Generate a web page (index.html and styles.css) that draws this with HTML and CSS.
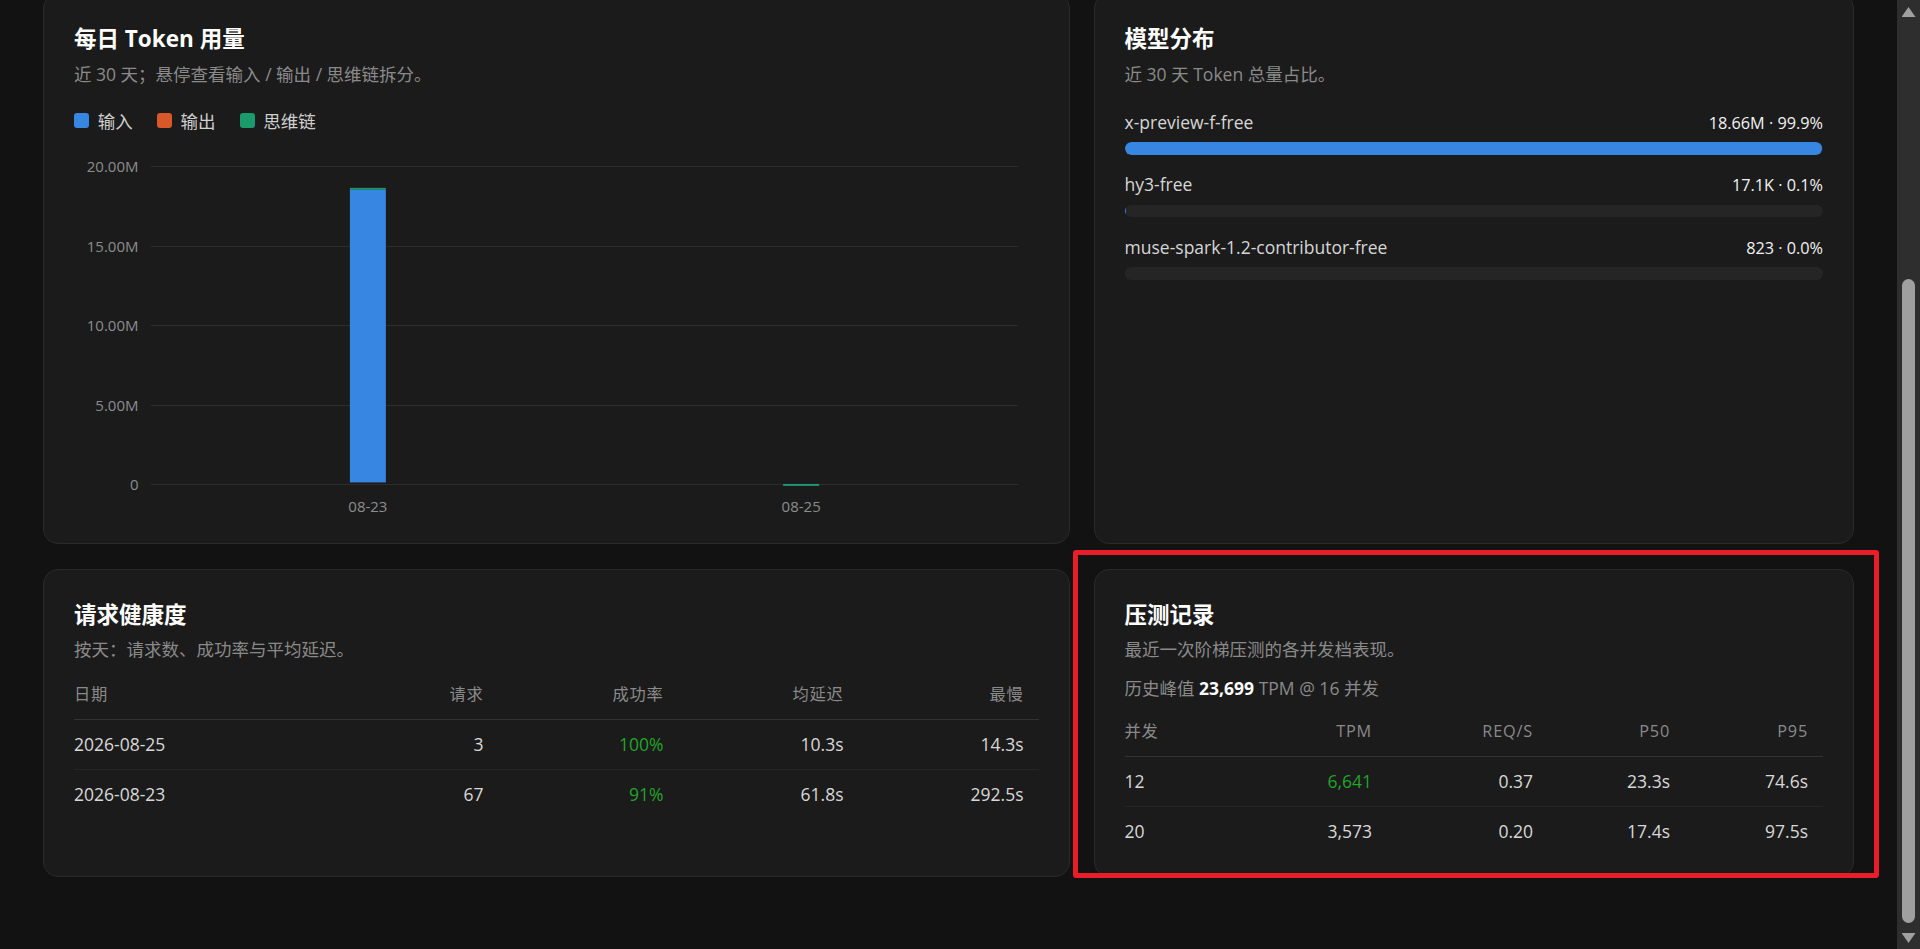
FILE: index.html
```html
<!DOCTYPE html>
<html lang="zh-CN">
<head>
<meta charset="utf-8">
<title>用量统计</title>
<link rel="stylesheet" href="styles.css">
</head>
<body>
<div class="viewport">
  <main class="page">
    <section class="board">
      <article class="card">
        <h2 class="card-title">每日 Token 用量</h2>
        <p class="card-desc">近 30 天；悬停查看输入 / 输出 / 思维链拆分。</p>
        <ul class="legend">
          <li class="legend-item"><span class="swatch swatch-input"></span>输入</li>
          <li class="legend-item"><span class="swatch swatch-output"></span>输出</li>
          <li class="legend-item"><span class="swatch swatch-reason"></span>思维链</li>
        </ul>
        <svg class="chart" viewBox="0 0 965 385" role="img" aria-label="每日 Token 用量">
          <g class="chart-grid">
            <line x1="77" x2="944" y1="28.5" y2="28.5"/>
            <line x1="77" x2="944" y1="108.5" y2="108.5"/>
            <line x1="77" x2="944" y1="187.5" y2="187.5"/>
            <line x1="77" x2="944" y1="267.5" y2="267.5"/>
            <line x1="77" x2="944" y1="346.5" y2="346.5"/>
          </g>
          <g class="chart-label chart-y">
            <text x="64.5" y="28.5" dy="0.35em">20.00M</text>
            <text x="64.5" y="108.5" dy="0.35em">15.00M</text>
            <text x="64.5" y="187.5" dy="0.35em">10.00M</text>
            <text x="64.5" y="267.5" dy="0.35em">5.00M</text>
            <text x="64.5" y="346.5" dy="0.35em">0</text>
          </g>
          <g class="chart-bars">
            <rect class="bar-input" x="276" y="51.8" width="36" height="292.7"/>
            <rect class="bar-reason" x="276" y="49.8" width="36" height="2"/>
            <rect class="bar-reason" x="709.5" y="346" width="36" height="2"/>
          </g>
          <g class="chart-label chart-x">
            <text x="294" y="368.7" dy="0.35em">08-23</text>
            <text x="727.5" y="368.7" dy="0.35em">08-25</text>
          </g>
        </svg>
      </article>

      <article class="card">
        <h2 class="card-title">模型分布</h2>
        <p class="card-desc">近 30 天 Token 总量占比。</p>
        <ul class="models">
          <li class="model">
            <div class="model-head"><span class="model-name">x-preview-f-free</span><span class="model-value">18.66M · 99.9%</span></div>
            <div class="model-track"><div class="model-fill" style="width: 99.9%"></div></div>
          </li>
          <li class="model">
            <div class="model-head"><span class="model-name">hy3-free</span><span class="model-value">17.1K · 0.1%</span></div>
            <div class="model-track"><div class="model-fill" style="width: 0.1%"></div></div>
          </li>
          <li class="model">
            <div class="model-head"><span class="model-name">muse-spark-1.2-contributor-free</span><span class="model-value">823 · 0.0%</span></div>
            <div class="model-track"><div class="model-fill" style="width: 0%"></div></div>
          </li>
        </ul>
      </article>

      <article class="card">
        <h2 class="card-title">请求健康度</h2>
        <p class="card-desc">按天：请求数、成功率与平均延迟。</p>
        <table class="data-table health-table">
          <colgroup>
            <col>
            <col class="col-w180">
            <col class="col-w180">
            <col class="col-w180">
            <col class="col-w180">
          </colgroup>
          <thead>
            <tr><th>日期</th><th>请求</th><th>成功率</th><th>均延迟</th><th>最慢</th></tr>
          </thead>
          <tbody>
            <tr><td>2026-08-25</td><td>3</td><td class="ok">100%</td><td>10.3s</td><td>14.3s</td></tr>
            <tr><td>2026-08-23</td><td>67</td><td class="ok">91%</td><td>61.8s</td><td>292.5s</td></tr>
          </tbody>
        </table>
      </article>

      <article class="card card-flagged">
        <h2 class="card-title">压测记录</h2>
        <p class="card-desc">最近一次阶梯压测的各并发档表现。</p>
        <p class="peak">历史峰值 <strong>23,699</strong> TPM @ 16 并发</p>
        <table class="data-table stress-table">
          <colgroup>
            <col>
            <col class="col-w140">
            <col class="col-w161">
            <col class="col-w137">
            <col class="col-w138">
          </colgroup>
          <thead>
            <tr><th>并发</th><th>tpm</th><th>req/s</th><th>p50</th><th>p95</th></tr>
          </thead>
          <tbody>
            <tr><td>12</td><td class="ok">6,641</td><td>0.37</td><td>23.3s</td><td>74.6s</td></tr>
            <tr><td>20</td><td>3,573</td><td>0.20</td><td>17.4s</td><td>97.5s</td></tr>
          </tbody>
        </table>
        <span class="flag-ring" aria-hidden="true"></span>
      </article>
    </section>
  </main>
</div>
<aside class="scroll-rail" aria-hidden="true">
  <span class="rail-btn rail-btn-up"><span class="rail-arrow rail-arrow-up"></span></span>
  <span class="rail-track"><span class="rail-thumb"></span></span>
  <span class="rail-btn rail-btn-down"><span class="rail-arrow rail-arrow-down"></span></span>
</aside>
</body>
</html>
```

FILE: styles.css
```css
* {
  box-sizing: border-box;
}

html,
body {
  margin: 0;
  height: 100%;
  background: #121212;
}

body {
  display: flex;
  font-family: "Open Sans", "Noto Sans CJK SC", sans-serif;
  color: #e6e6e6;
  font-size: 17.5px;
  line-height: 26px;
  overflow: hidden;
}

.viewport {
  flex: 1;
  min-width: 0;
  height: 100vh;
  overflow-y: auto;
  scrollbar-width: none;
  display: flex;
  flex-direction: column-reverse;
}

.page {
  flex-shrink: 0;
  padding: 0 43px 72px;
}

/* Dark scroll rail */
.scroll-rail {
  flex: 0 0 23px;
  display: flex;
  flex-direction: column;
  height: 100vh;
  background: #2e2e2e;
}

.rail-btn {
  height: 26px;
  flex-shrink: 0;
  display: flex;
  justify-content: center;
  align-items: flex-start;
}

.rail-btn-up {
  padding-top: 7px;
}

.rail-btn-down {
  padding-top: 10px;
}

.rail-arrow {
  width: 14px;
  height: 10px;
  background: #a0a0a0;
}

.rail-arrow-up {
  clip-path: polygon(50% 0, 100% 100%, 0 100%);
}

.rail-arrow-down {
  clip-path: polygon(0 0, 100% 0, 50% 100%);
}

.rail-track {
  flex: 1;
  display: flex;
  flex-direction: column;
  justify-content: flex-end;
  padding: 0 5px;
}

.rail-thumb {
  height: 644px;
  border-radius: 6.5px;
  background: #a0a0a0;
}

/* Panels */
.board {
  display: grid;
  grid-template-columns: minmax(0, 1.35fr) minmax(0, 1fr);
  gap: 25px 24px;
}

.card {
  background: #1b1b1b;
  border: 1px solid #2a2a2a;
  border-radius: 15px;
  padding: 30px 30px 20px;
}

.card-title {
  margin: 0;
  font-size: 22.5px;
  line-height: 29px;
  font-weight: 700;
  color: #fff;
}

.card-desc {
  margin: 7.5px 0 0;
  color: #8a8a8a;
}

.legend {
  display: flex;
  gap: 24px;
  margin: 21px 0 0;
  padding: 0;
  list-style: none;
  color: #cfcfcf;
}

.legend-item {
  display: flex;
  align-items: center;
  gap: 8.75px;
}

.swatch {
  width: 15px;
  height: 15px;
  border-radius: 3px;
}

.swatch-input {
  background: #3786e1;
}

.swatch-output {
  background: #d8582a;
}

.swatch-reason {
  background: #1b9b6c;
}

.chart {
  display: block;
  width: 100%;
  height: 385px;
  margin-top: 4px;
}

.chart-grid line {
  stroke: #2d2d2d;
  stroke-width: 1;
  shape-rendering: crispEdges;
}

.chart-label text {
  font-family: "Open Sans", "Noto Sans CJK SC", sans-serif;
  font-size: 15px;
  fill: #8c8c8c;
}

.chart-y text {
  text-anchor: end;
}

.chart-x text {
  text-anchor: middle;
}

.bar-input {
  fill: #3786e1;
}

.bar-reason {
  fill: #1f9470;
}

/* Model share list */
.models {
  display: flex;
  flex-direction: column;
  gap: 16.5px;
  margin: 22px 0 0;
  padding: 0;
  list-style: none;
}

.model-head {
  display: flex;
  justify-content: space-between;
  align-items: baseline;
  height: 26px;
}

.model-name {
  color: #d6d6d6;
}

.model-value {
  font-size: 16.25px;
  line-height: 1;
  color: #f2f2f2;
}

.model-track {
  height: 12.5px;
  margin-top: 7.5px;
  border-radius: 6.25px;
  background: #252525;
  overflow: hidden;
}

.model-fill {
  height: 100%;
  background: #3786e1;
  border-radius: 6.25px;
}

/* Tables */
.data-table {
  width: 100%;
  border-collapse: collapse;
  table-layout: fixed;
  margin-top: 8px;
  line-height: 25px;
}

.stress-table {
  margin-top: 6.5px;
}

.data-table th,
.data-table td {
  padding: 12px 15px 12px 0;
  text-align: right;
  white-space: nowrap;
}

.data-table th:first-child,
.data-table td:first-child {
  text-align: left;
}

.data-table th {
  font-size: 16.25px;
  font-weight: 400;
  letter-spacing: 0.05em;
  text-transform: uppercase;
  color: #8a8a8a;
  border-bottom: 1px solid #333;
}

.data-table td {
  color: #d8d8d8;
  border-bottom: 1px solid #262626;
}

.data-table tbody tr:last-child td {
  border-bottom: 0;
}

.data-table td.ok {
  color: #22a32a;
}

.col-w180 {
  width: 180px;
}

.col-w140 {
  width: 140px;
}

.col-w161 {
  width: 161px;
}

.col-w137 {
  width: 137px;
}

.col-w138 {
  width: 138px;
}

.peak {
  margin: 12.5px 0 0;
  color: #8a8a8a;
}

.peak strong {
  color: #fff;
  font-weight: 700;
}

/* Highlight frame around the stress-test panel */
.card-flagged {
  position: relative;
}

.flag-ring {
  position: absolute;
  top: -20px;
  left: -22px;
  right: -26px;
  bottom: -2px;
  border: 5px solid #e81f28;
  border-radius: 3px;
  pointer-events: none;
}
```
